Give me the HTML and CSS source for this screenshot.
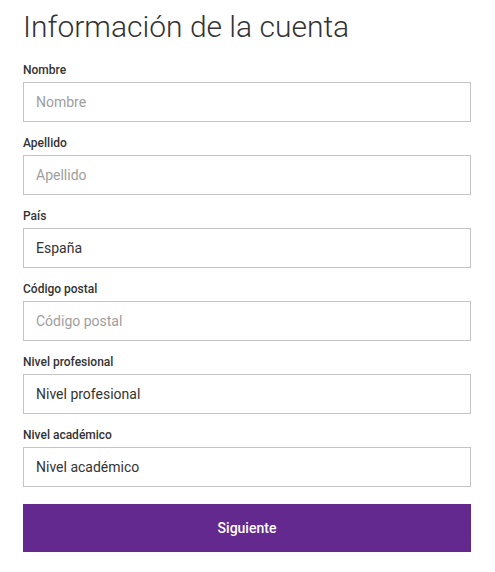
FILE: index.html
```html
<!DOCTYPE html>
<html lang="es">
<head>
<meta charset="utf-8">
<title>Información de la cuenta</title>
<link rel="stylesheet" href="styles.css">
</head>
<body>
<main class="page">
  <h1 class="title">Información de la cuenta</h1>
  <form class="form">
    <div class="field">
      <label class="label" for="nombre">Nombre</label>
      <input class="input" id="nombre" type="text" placeholder="Nombre">
    </div>
    <div class="field">
      <label class="label" for="apellido">Apellido</label>
      <input class="input" id="apellido" type="text" placeholder="Apellido">
    </div>
    <div class="field">
      <label class="label" for="pais">País</label>
      <input class="input" id="pais" type="text" value="España">
    </div>
    <div class="field">
      <label class="label" for="cp">Código postal</label>
      <input class="input" id="cp" type="text" placeholder="Código postal">
    </div>
    <div class="field">
      <label class="label" for="prof">Nivel profesional</label>
      <input class="input" id="prof" type="text" value="Nivel profesional">
    </div>
    <div class="field">
      <label class="label" for="acad">Nivel académico</label>
      <input class="input" id="acad" type="text" value="Nivel académico">
    </div>
    <button class="button" type="button">Siguiente</button>
  </form>
</main>
</body>
</html>
```

FILE: styles.css
```css
html, body {
  margin: 0;
  padding: 0;
  background: #ffffff;
}

body {
  font-family: Roboto, "Liberation Sans", sans-serif;
  color: #333333;
}

.page {
  padding: 7px 24px 0 23px;
}

.title {
  margin: 0 0 15px;
  font-size: 30px;
  line-height: 40px;
  font-weight: 300;
  color: #333333;
}

.form {
  display: flex;
  flex-direction: column;
}

.field {
  display: flex;
  flex-direction: column;
  margin-bottom: 13px;
}

.label {
  font-size: 12px;
  line-height: 16px;
  font-weight: 500;
  color: #333333;
  margin-bottom: 4px;
}

.input {
  box-sizing: border-box;
  height: 40px;
  width: 100%;
  margin: 0;
  padding: 0 12px;
  border: 1px solid #c4c4c4;
  border-radius: 0;
  font-family: Roboto, "Liberation Sans", sans-serif;
  font-size: 14px;
  color: #333333;
  background: #ffffff;
  outline: none;
}

.input::placeholder {
  color: #9e9e9e;
  opacity: 1;
}

.button {
  margin-top: 4px;
  height: 48px;
  width: 100%;
  border: 0;
  border-radius: 0;
  background: #63298f;
  color: #ffffff;
  font-family: Roboto, "Liberation Sans", sans-serif;
  font-size: 14px;
  font-weight: 500;
  cursor: pointer;
}
```
